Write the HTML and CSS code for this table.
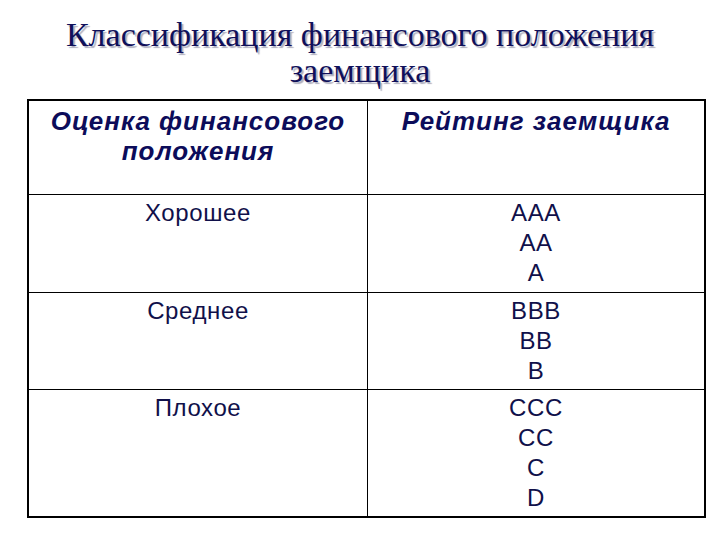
FILE: index.html
```html
<!DOCTYPE html>
<html lang="ru">
<head>
<meta charset="utf-8">
<link rel="stylesheet" href="styles.css">
</head>
<body>
<div class="slide">
  <h1 class="title">Классификация финансового положения<br>заемщика</h1>
  <table class="grid">
    <tr class="head">
      <th>Оценка финансового<br>положения</th>
      <th>Рейтинг заемщика</th>
    </tr>
    <tr class="r1">
      <td>Хорошее</td>
      <td>AAA<br>AA<br>A</td>
    </tr>
    <tr class="r2">
      <td>Среднее</td>
      <td>BBB<br>BB<br>B</td>
    </tr>
    <tr class="r3">
      <td>Плохое</td>
      <td>CCC<br>CC<br>C<br>D</td>
    </tr>
  </table>
</div>
</body>
</html>
```

FILE: styles.css
```css
html, body {
  margin: 0;
  padding: 0;
  background: #ffffff;
}
.slide {
  width: 720px;
  height: 540px;
  padding-top: 17px;
  box-sizing: border-box;
}
.title {
  margin: 0;
  text-align: center;
  font-family: "Liberation Serif", serif;
  font-weight: normal;
  font-size: 34px;
  line-height: 36px;
  color: #10105a;
  text-shadow: 2px 2px 1px #b0b0c0;
}
.grid {
  margin: 10px 0 0 27px;
  width: 679px;
  border-collapse: collapse;
  border: 2px solid #000;
  table-layout: fixed;
  font-family: "Liberation Sans", sans-serif;
  color: #10104a;
}
.grid th, .grid td {
  border: 1px solid #000;
  text-align: center;
  vertical-align: top;
  padding: 0;
}
.grid th:first-child, .grid td:first-child {
  width: 338px;
}
.grid th {
  font-size: 26px;
  letter-spacing: 1px;
  font-style: italic;
  font-weight: bold;
  line-height: 30px;
  padding-top: 5px;
  color: #0c0c5a;
}
.grid td {
  font-size: 24px;
  letter-spacing: 0.6px;
  line-height: 30px;
  padding-top: 3px;
}
.head { height: 94px; }
.r1 { height: 98px; }
.r2 { height: 97px; }
.r3 { height: 128px; }
```
